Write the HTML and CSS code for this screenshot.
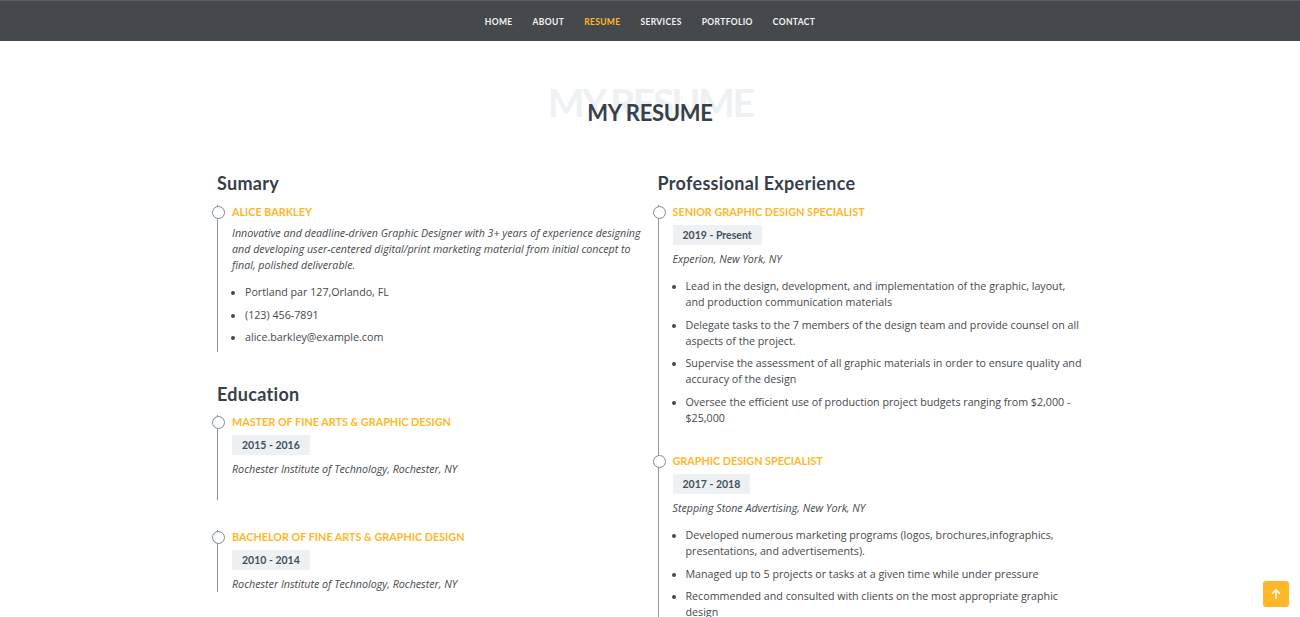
FILE: index.html
```html
<!DOCTYPE html>
<html lang="en">
<head>
<meta charset="utf-8">
<title>My Resume</title>
<link rel="stylesheet" href="styles.css">
</head>
<body>
<header class="topbar">
  <nav>
    <ul class="nav">
      <li><a href="#">Home</a></li>
      <li><a href="#">About</a></li>
      <li><a href="#" class="active">Resume</a></li>
      <li><a href="#">Services</a></li>
      <li><a href="#">Portfolio</a></li>
      <li><a href="#">Contact</a></li>
    </ul>
  </nav>
</header>

<main class="resume">
  <div class="section-title">
    <span class="ghost">My Resume</span>
    <h2>My Resume</h2>
  </div>

  <div class="cols">
    <div class="col">
      <h3 class="resume-title">Sumary</h3>
      <div class="item last">
        <h4>Alice Barkley</h4>
        <p class="em">Innovative and deadline-driven Graphic Designer with 3+ years of experience designing and developing user-centered digital/print marketing material from initial concept to final, polished deliverable.</p>
        <ul>
          <li>Portland par 127,Orlando, FL</li>
          <li>(123) 456-7891</li>
          <li>alice.barkley@example.com</li>
        </ul>
      </div>

      <h3 class="resume-title edu-title">Education</h3>
      <div class="item edu">
        <h4>Master of Fine Arts &amp; Graphic Design</h4>
        <div class="badge">2015 - 2016</div>
        <p class="em">Rochester Institute of Technology, Rochester, NY</p>
      </div>
      <div class="item edu last">
        <h4>Bachelor of Fine Arts &amp; Graphic Design</h4>
        <div class="badge">2010 - 2014</div>
        <p class="em">Rochester Institute of Technology, Rochester, NY</p>
      </div>
    </div>

    <div class="col">
      <h3 class="resume-title">Professional Experience</h3>
      <div class="item">
        <h4>Senior graphic design specialist</h4>
        <div class="badge">2019 - Present</div>
        <p class="em">Experion, New York, NY</p>
        <ul>
          <li>Lead in the design, development, and implementation of the graphic, layout, and production communication materials</li>
          <li>Delegate tasks to the 7 members of the design team and provide counsel on all aspects of the project.</li>
          <li>Supervise the assessment of all graphic materials in order to ensure quality and accuracy of the design</li>
          <li>Oversee the efficient use of production project budgets ranging from $2,000 - $25,000</li>
        </ul>
      </div>
      <div class="item last">
        <h4>Graphic design specialist</h4>
        <div class="badge">2017 - 2018</div>
        <p class="em">Stepping Stone Advertising, New York, NY</p>
        <ul>
          <li>Developed numerous marketing programs (logos, brochures,infographics, presentations, and advertisements).</li>
          <li>Managed up to 5 projects or tasks at a given time while under pressure</li>
          <li>Recommended and consulted with clients on the most appropriate graphic design</li>
        </ul>
      </div>
    </div>
  </div>
</main>

<a href="#" class="back-top" aria-label="Back to top">
  <svg width="12" height="12" viewBox="0 0 12 12" fill="none" stroke="#fff" stroke-width="1.6" stroke-linecap="round" stroke-linejoin="round"><path d="M6 10.5V1.8M2.6 5.1L6 1.7l3.4 3.4"/></svg>
</a>
</body>
</html>
```

FILE: styles.css
```css
* { box-sizing: border-box; }
html, body { margin: 0; padding: 0; }
html { overflow: hidden; }
body {
  font-family: "Open Sans", "Liberation Sans", sans-serif;
  color: #45494d;
  background: #fff;
}

.topbar {
  height: 41px;
  background: #46494c;
  border-top: 1px solid #5d6165;
  display: flex;
  align-items: center;
  justify-content: center;
  padding-bottom: 4px;
}
.nav {
  list-style: none;
  margin: 0;
  padding: 0;
  display: flex;
  gap: 20px;
}
.nav a {
  font-family: "Lato", "Open Sans", sans-serif;
  font-weight: 700;
  font-size: 8.5px;
  letter-spacing: 0.35px;
  text-transform: uppercase;
  color: #f2f3f4;
  text-decoration: none;
}
.nav a.active { color: #ffb727; }

.resume {
  width: 866px;
  margin: 0 auto;
}

.section-title {
  position: relative;
  text-align: center;
  padding-top: 59px;
}
.section-title .ghost {
  position: absolute;
  left: 0;
  right: 0;
  top: 40px;
  font-family: "Lato", sans-serif;
  font-weight: 700;
  font-size: 39px;
  line-height: 42px;
  letter-spacing: -2.5px;
  text-transform: uppercase;
  color: #eef1f3;
  white-space: nowrap;
}
.section-title h2 {
  position: relative;
  margin: 0;
  font-family: "Lato", sans-serif;
  font-weight: 700;
  font-size: 22px;
  line-height: 26px;
  letter-spacing: -0.3px;
  text-transform: uppercase;
  color: #37404a;
}

.cols {
  display: grid;
  grid-template-columns: 1fr 1fr;
  column-gap: 15px;
  margin-top: 46px;
}

.resume-title {
  margin: 0 0 11px;
  font-family: "Lato", sans-serif;
  font-weight: 700;
  font-size: 18px;
  line-height: 22px;
  letter-spacing: 0.3px;
  color: #37404a;
}
.edu-title { margin-top: 31px; margin-bottom: 10px; }

.item {
  position: relative;
  border-left: 1px solid #8d98a3;
  padding: 0 0 22px 14px;
}
.item.last { padding-bottom: 0; }
.item.edu { padding-bottom: 23px; }
.item.edu + .item.edu { margin-top: 30px; }
.item.edu.last { padding-bottom: 0; }
.item::before {
  content: "";
  position: absolute;
  left: -6px;
  top: 1px;
  width: 11px;
  height: 11px;
  border-radius: 50%;
  border: 1px solid #7d8a96;
  background: #fff;
}

.item h4 {
  margin: 0 0 6px;
  font-family: "Lato", sans-serif;
  font-weight: 700;
  font-size: 10.8px;
  line-height: 14px;
  text-transform: uppercase;
  color: #ffb727;
}
.badge {
  display: table;
  height: 20px;
  line-height: 20px;
  padding: 0 10px;
  margin-bottom: 6px;
  background: #eef1f3;
  font-family: "Lato", sans-serif;
  font-weight: 700;
  font-size: 10.5px;
  color: #45505b;
}
.em {
  margin: 0;
  font-style: italic;
  font-size: 10.7px;
  line-height: 16px;
  color: #45494d;
}
.item ul {
  margin: 11px 0 0;
  padding-left: 13px;
}
.item li {
  font-size: 10.7px;
  line-height: 16px;
  padding-bottom: 6.5px;
  color: #45494d;
}

.back-top {
  position: fixed;
  right: 11px;
  bottom: 10px;
  width: 26px;
  height: 26px;
  border-radius: 3px;
  background: #ffb727;
  display: flex;
  align-items: center;
  justify-content: center;
}
```
